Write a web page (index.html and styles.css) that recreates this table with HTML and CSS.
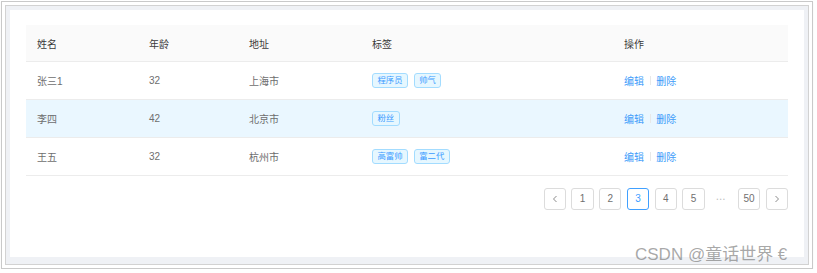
FILE: index.html
```html
<!DOCTYPE html>
<html lang="zh-CN">
<head>
<meta charset="utf-8">
<title>Table</title>
<link rel="stylesheet" href="styles.css">
</head>
<body>
<div class="frame">
  <div class="inner">
    <div class="card">
      <div class="table">
        <div class="row head">
          <div class="cell">姓名</div>
          <div class="cell">年龄</div>
          <div class="cell">地址</div>
          <div class="cell">标签</div>
          <div class="cell">操作</div>
        </div>
        <div class="row">
          <div class="cell">张三1</div>
          <div class="cell">32</div>
          <div class="cell">上海市</div>
          <div class="cell"><span class="tag">程序员</span><span class="tag">帅气</span></div>
          <div class="cell"><a class="link">编辑</a><span class="divider"></span><a class="link">删除</a></div>
        </div>
        <div class="row hover">
          <div class="cell">李四</div>
          <div class="cell">42</div>
          <div class="cell">北京市</div>
          <div class="cell"><span class="tag">粉丝</span></div>
          <div class="cell"><a class="link">编辑</a><span class="divider"></span><a class="link">删除</a></div>
        </div>
        <div class="row">
          <div class="cell">王五</div>
          <div class="cell">32</div>
          <div class="cell">杭州市</div>
          <div class="cell"><span class="tag">高富帅</span><span class="tag">富二代</span></div>
          <div class="cell"><a class="link">编辑</a><span class="divider"></span><a class="link">删除</a></div>
        </div>
      </div>
      <div class="pager">
        <span class="pg"><svg class="chev" viewBox="0 0 6 8" width="6" height="8"><polyline points="4.5,1 1.5,4 4.5,7" fill="none" stroke="#8c8c8c" stroke-width="1"/></svg></span>
        <span class="pg">1</span>
        <span class="pg">2</span>
        <span class="pg active">3</span>
        <span class="pg">4</span>
        <span class="pg">5</span>
        <span class="ellipsis">•••</span>
        <span class="pg">50</span>
        <span class="pg"><svg class="chev" viewBox="0 0 6 8" width="6" height="8"><polyline points="1.5,1 4.5,4 1.5,7" fill="none" stroke="#8c8c8c" stroke-width="1"/></svg></span>
      </div>
    </div>
  </div>
  <div class="watermark">CSDN @童话世界 €</div>
</div>
</body>
</html>
```

FILE: styles.css
```css
html, body {
  margin: 0;
  padding: 0;
  background: #ffffff;
}
body {
  font-family: "Liberation Sans", "Noto Sans CJK SC", sans-serif;
  font-size: 10px;
  color: #6e6e6e;
}
.frame {
  position: relative;
  box-sizing: border-box;
  margin: 1px 0 0 1px;
  width: 812px;
  height: 268px;
  border: 1px solid #c9c9c9;
  padding: 3px;
  box-shadow: 0 1px 1px rgba(0, 0, 0, 0.08);
}
.inner {
  box-sizing: border-box;
  height: 100%;
  border: 1px solid #d2d2d2;
  background: #eff1f5;
  padding: 4px 4px 7px 4px;
}
.card {
  box-sizing: border-box;
  height: 100%;
  background: #ffffff;
  padding: 15px 16px 0 16px;
}
.table {
  display: flex;
  flex-direction: column;
}
.row {
  display: grid;
  grid-template-columns: 112px 100px 123px 252px 1fr;
  box-sizing: border-box;
  height: 38px;
  border-bottom: 1px solid #ececec;
  align-items: center;
}
.row.head {
  height: 37px;
  background: #fafafa;
  color: #3a3a3a;
}
.row.hover {
  background: #eaf7ff;
}
.cell {
  padding: 0 11px;
  display: flex;
  align-items: center;
  white-space: nowrap;
}
.tag {
  box-sizing: border-box;
  display: inline-block;
  height: 15px;
  line-height: 13px;
  padding: 0 4.5px;
  margin-right: 5.6px;
  font-size: 8.4px;
  color: #3b9bff;
  background: #e6f7ff;
  border: 1px solid #a3dcff;
  border-radius: 3px;
}
.link {
  color: #3d9cfa;
  cursor: pointer;
}
.divider {
  display: inline-block;
  width: 1px;
  height: 9px;
  background: #e8e8e8;
  margin: 0 5.6px;
}
.pager {
  display: flex;
  justify-content: flex-end;
  align-items: center;
  gap: 5.6px;
  margin-top: 11.6px;
}
.pg {
  box-sizing: border-box;
  width: 22.2px;
  height: 22px;
  display: flex;
  align-items: center;
  justify-content: center;
  border: 1px solid #dcdcdc;
  border-radius: 3px;
  font-size: 10px;
  color: #707070;
  background: #fff;
}
.pg.active {
  border-color: #40a0ff;
  color: #40a0ff;
}
.ellipsis {
  width: 22.2px;
  text-align: center;
  font-size: 5px;
  letter-spacing: 1.5px;
  color: #bfbfbf;
}
.chev {
  display: block;
}
.watermark {
  position: absolute;
  left: 633px;
  top: 243px;
  font-size: 17px;
  line-height: 20px;
  color: rgba(110, 110, 110, 0.6);
  white-space: nowrap;
}
```
